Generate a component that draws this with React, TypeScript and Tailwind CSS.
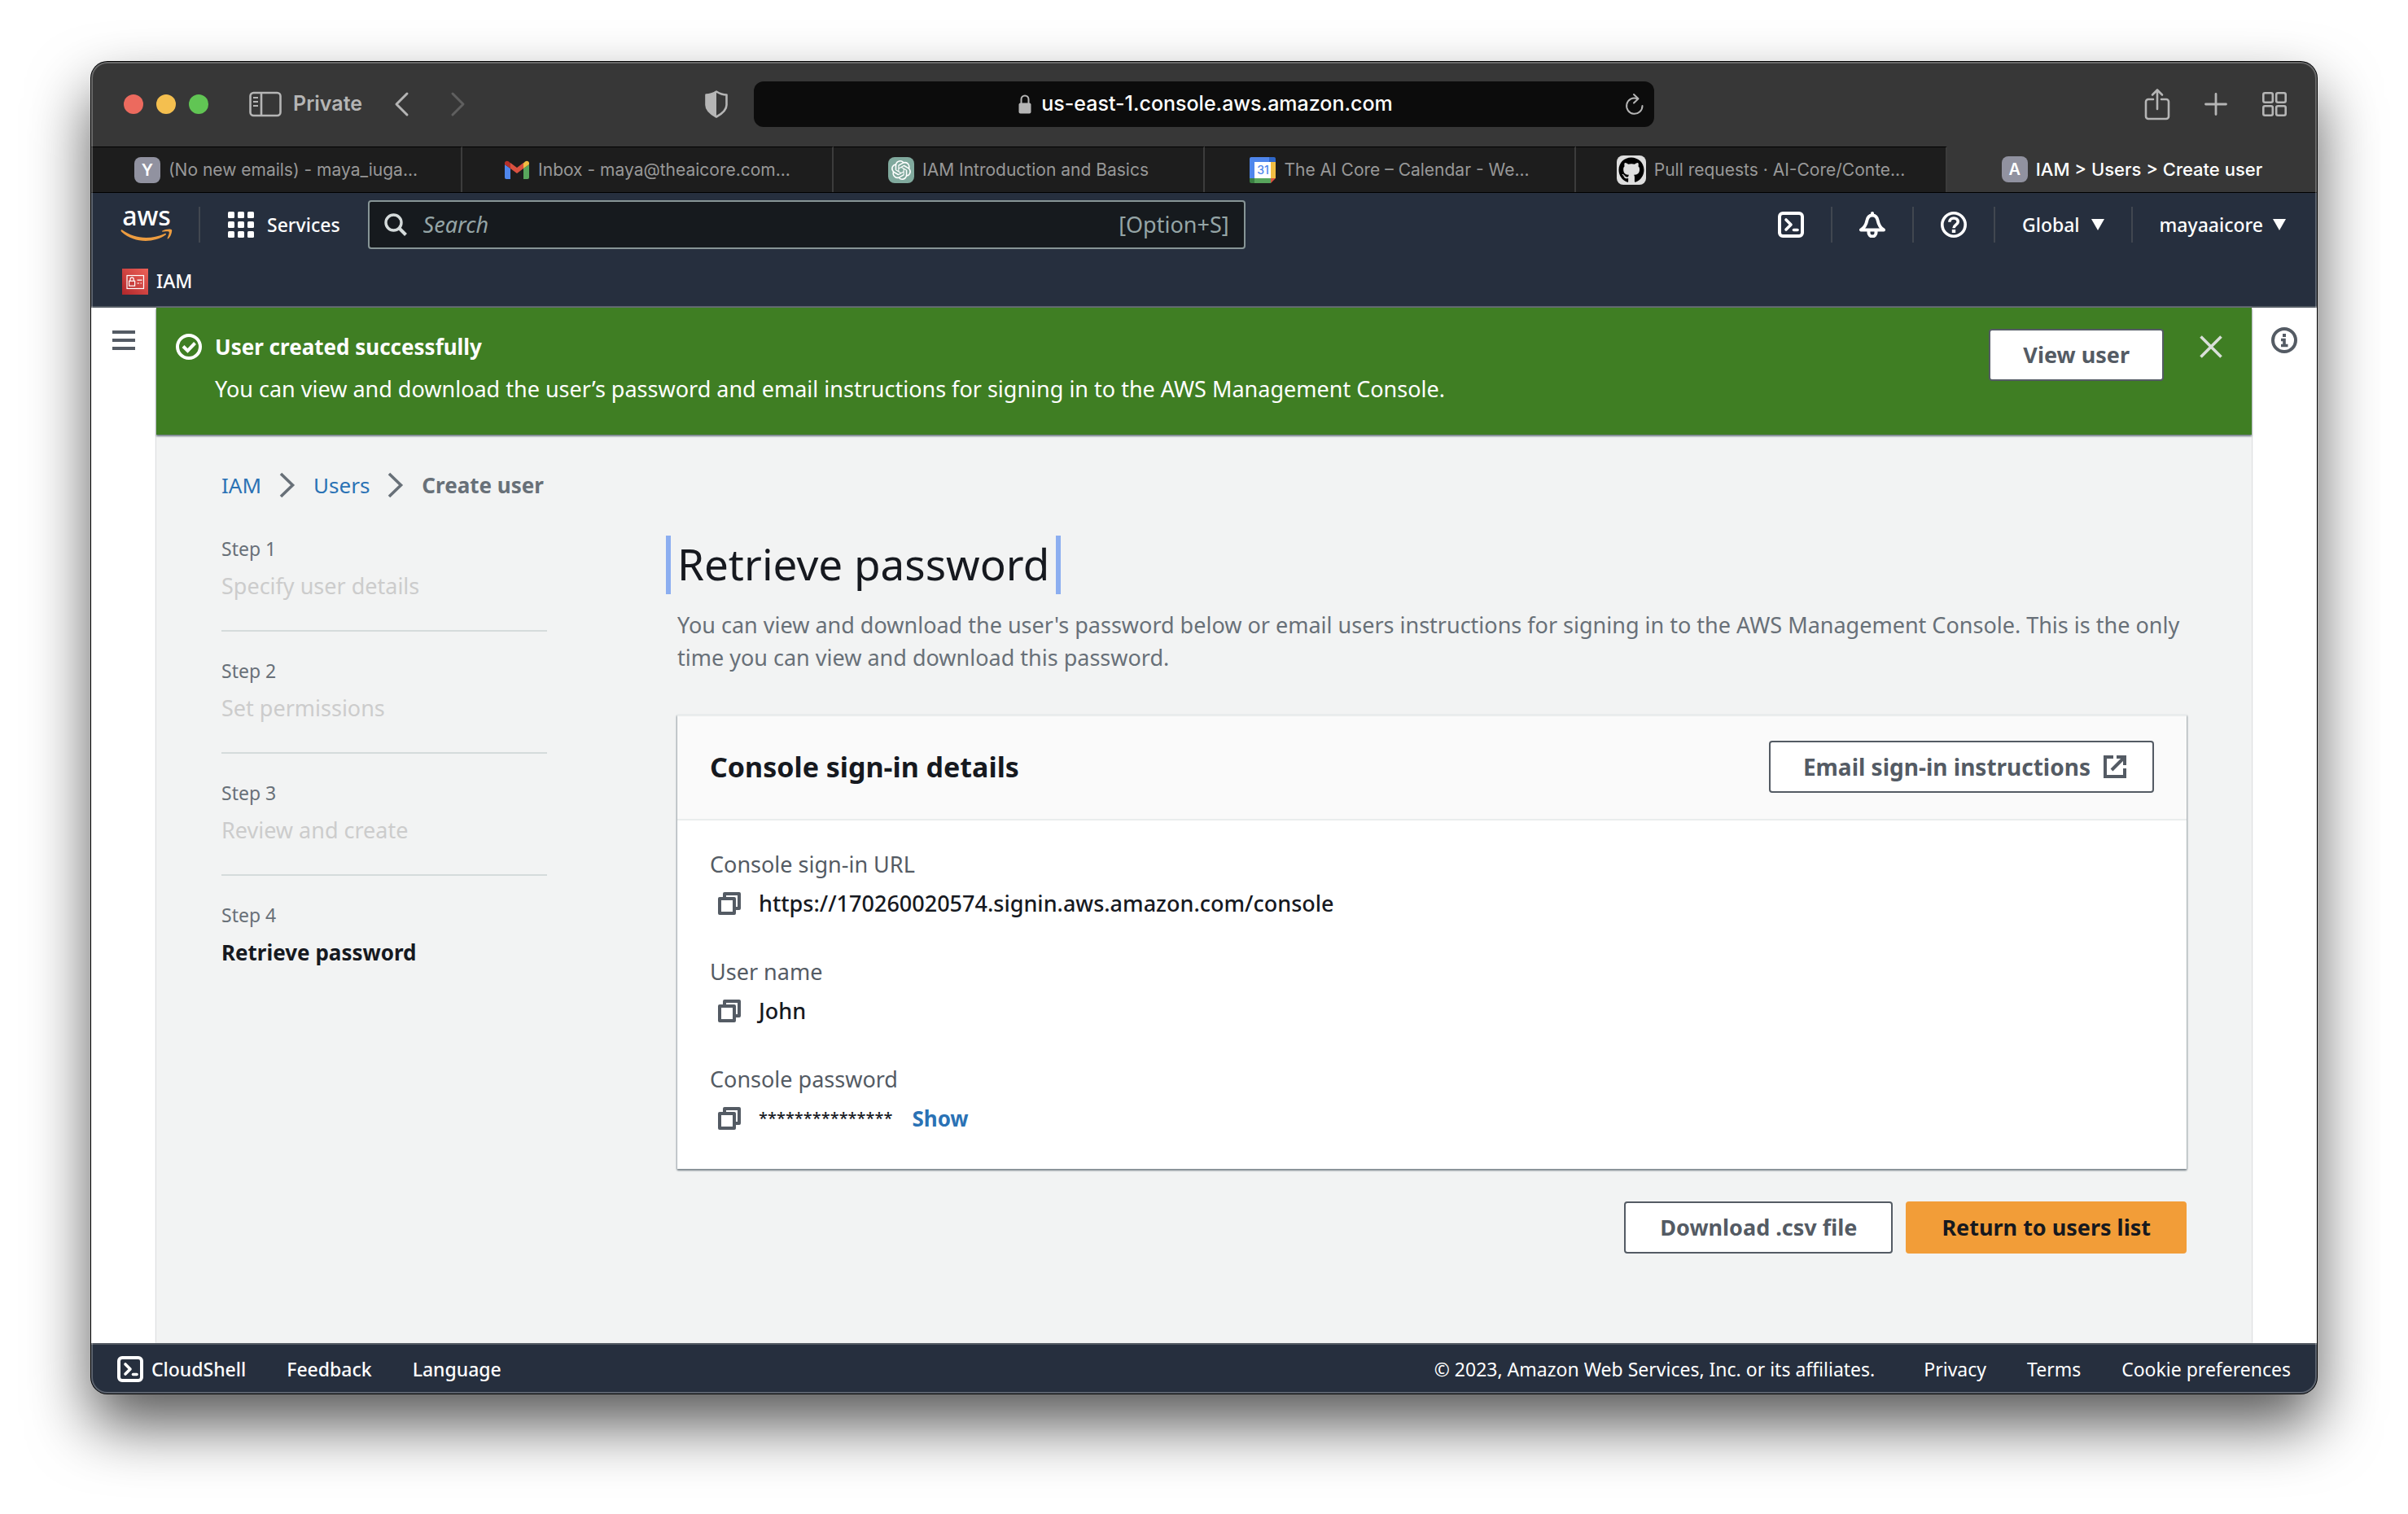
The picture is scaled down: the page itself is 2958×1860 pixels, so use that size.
import type { ReactNode } from 'react';
import { FaGithub } from 'react-icons/fa';
import { SiOpenai } from 'react-icons/si';

/* ---------- Icons ---------- */

const SidebarIcon = () => (
  <svg className="h-8 w-10" viewBox="0 0 40 32" fill="none" stroke="currentColor" strokeWidth="2.6" aria-hidden="true">
    <rect x="1.5" y="2" width="37" height="28" rx="4" />
    <path d="M15 2v28" />
    <path d="M5 8h6M5 13h6M5 18h6" strokeWidth="2" />
  </svg>
);

const ChevronLeftThin = () => (
  <svg className="h-8 w-5" viewBox="0 0 20 32" fill="none" stroke="currentColor" strokeWidth="3" strokeLinecap="round" strokeLinejoin="round" aria-hidden="true">
    <path d="M17 3L4 16l13 13" />
  </svg>
);

const ChevronRightThin = () => (
  <svg className="h-8 w-5" viewBox="0 0 20 32" fill="none" stroke="currentColor" strokeWidth="3" strokeLinecap="round" strokeLinejoin="round" aria-hidden="true">
    <path d="M3 3l13 13L3 29" />
  </svg>
);

const ShieldIcon = () => (
  <svg className="h-9 w-7" viewBox="0 0 28 36" aria-hidden="true">
    <path d="M14 2.500C18 5 22 6.500 26.500 6.500V19c0 7-6 11-12.500 14.500C7.500 30 1.500 26 1.500 19V6.500C6 6.500 10 5 14 2.500z" fill="none" stroke="currentColor" strokeWidth="2.600" strokeLinejoin="round" />
    <path d="M14 2.500V33.500C7.500 30 1.500 26 1.500 19V6.500C6 6.500 10 5 14 2.500z" fill="currentColor" />
  </svg>
);

const LockIcon = () => (
  <svg className="h-6 w-4" viewBox="0 0 16 24" aria-hidden="true">
    <rect x="0.500" y="10.500" width="15" height="13" rx="2" fill="currentColor" />
    <path d="M3.500 11V6a4.500 4.500 0 0 1 9 0v5" fill="none" stroke="currentColor" strokeWidth="2" />
  </svg>
);

const ReloadIcon = () => (
  <svg className="h-7 w-6" viewBox="0 0 24 28" fill="none" stroke="currentColor" strokeWidth="2" strokeLinecap="round" strokeLinejoin="round" aria-hidden="true">
    <path d="M21.500 16A9.700 9.700 0 1 1 15 7" />
    <path d="M11 2l5.500 5.200L11 12.500" />
  </svg>
);

const ShareIcon = () => (
  <svg className="h-10 w-8" viewBox="0 0 32 40" fill="none" stroke="currentColor" strokeWidth="2.600" strokeLinecap="round" strokeLinejoin="round" aria-hidden="true">
    <path d="M11 14H5a3 3 0 0 0-3 3v18a3 3 0 0 0 3 3h22a3 3 0 0 0 3-3V17a3 3 0 0 0-3-3h-6" />
    <path d="M16 26V3M10 8.500L16 2.500l6 6" />
  </svg>
);

const PlusIcon = () => (
  <svg className="h-7 w-7" viewBox="0 0 28 28" fill="none" stroke="currentColor" strokeWidth="2.800" strokeLinecap="round" aria-hidden="true">
    <path d="M14 1.500v25M1.500 14h25" />
  </svg>
);

const TabGridIcon = () => (
  <svg className="h-8 w-8" viewBox="0 0 32 32" fill="none" stroke="currentColor" strokeWidth="2.600" aria-hidden="true">
    <rect x="2.300" y="2.300" width="11.500" height="11.500" rx="2" />
    <rect x="18.200" y="2.300" width="11.500" height="11.500" rx="2" />
    <rect x="2.300" y="18.200" width="11.500" height="11.500" rx="2" />
    <rect x="18.200" y="18.200" width="11.500" height="11.500" rx="2" />
  </svg>
);

const GmailIcon = () => (
  <svg className="h-6 w-8" viewBox="0 0 32 24" aria-hidden="true">
    <path d="M1 4v17a2 2 0 0 0 2 2h5V10L1 5z" fill="#4f86ec" />
    <path d="M31 4v17a2 2 0 0 1-2 2h-5V10l7-5z" fill="#58a55c" />
    <path d="M24 3.500V10l7-5V3.500C31 .8 28 0 26 1.500z" fill="#f1bd42" />
    <path d="M1 3.500V5l7 5V3.500L6 1.500C4 0 1 .8 1 3.500z" fill="#b5302a" />
    <path d="M8 10V3l8 6 8-6v7l-8 6z" fill="#d95140" />
  </svg>
);

const CalendarIcon = () => (
  <span className="relative flex size-8 items-center justify-center">
    <svg className="absolute inset-0 size-8" viewBox="0 0 32 32" aria-hidden="true">
      <path d="M2 0h22v6H6v20H0V2a2 2 0 0 1 2-2z" fill="#4f86ec" />
      <path d="M24 0h6a2 2 0 0 1 2 2v4h-8z" fill="#2f67c8" />
      <path d="M26 6h6v20h-6z" fill="#f1bd42" />
      <path d="M6 26h20v6H6z" fill="#58a55c" />
      <path d="M0 26h6v6H2a2 2 0 0 1-2-2z" fill="#3a7f42" />
      <path d="M26 26h6l-6 6z" fill="#d95140" />
      <path d="M6 6h20v20H6z" fill="#fff" />
    </svg>
    <span className="relative font-['Inter',sans-serif] text-[14px] font-medium leading-none text-[#4f86ec]">31</span>
  </span>
);

const Smile = () => (
  <svg className="h-4 w-16" viewBox="0 0 64 16" aria-hidden="true">
    <path d="M1 1.500C0 2 .5 3 1.500 4 10 11.500 20 15 31 15c8.500 0 18-2.800 24.500-7.500 1.200-.9.200-2.200-1-1.600C47 9.200 39 11 31.500 11 20.500 11 10.500 7.500 2.500 1.800 2 1.300 1.400 1.200 1 1.500z" fill="#ec9c40" />
    <path d="M63 1.200C61.800-.3 54.500.5 51.500 2.600c-.7.500-.5 1.200.3 1.100 2.500-.3 7-.8 7.800.3.8 1-1 5.300-2 7.700-.3.800.3 1.100 1 .5C62.500 9.500 63.700 2.300 63 1.200z" fill="#ec9c40" />
  </svg>
);

const ServicesIcon = () => (
  <svg className="size-8" viewBox="0 0 32 32" fill="currentColor" aria-hidden="true">
    {[0, 12, 24].map((y) => [0, 12, 24].map((x) => <rect key={`${x}-${y}`} x={x} y={y} width="8" height="8" rx="1.500" />))}
  </svg>
);

const SearchIcon = () => (
  <svg className="size-7" viewBox="0 0 28 28" fill="none" stroke="currentColor" strokeWidth="3.400" aria-hidden="true">
    <circle cx="11.500" cy="11.500" r="9.500" />
    <path d="M18 18L26.500 26.500" strokeWidth="4" />
  </svg>
);

const ShellIcon = () => (
  <svg className="size-8" viewBox="0 0 32 32" fill="none" stroke="currentColor" strokeWidth="4" strokeLinecap="round" strokeLinejoin="round" aria-hidden="true">
    <rect x="2" y="2" width="28" height="28" rx="4" />
    <path d="M10 10l6 6-6 6" strokeWidth="3.600" />
    <path d="M19.500 22.500h4.500" strokeWidth="3.600" />
  </svg>
);

const BellIcon = () => (
  <svg className="size-8" viewBox="0 0 32 32" fill="none" stroke="currentColor" strokeWidth="4" strokeLinecap="round" strokeLinejoin="round" aria-hidden="true">
    <path d="M16 2v2" />
    <path d="M16 4.500c-4 0-6 2.500-6.800 7C8.200 17 6.500 19.500 2 22.500h28c-4.500-3-6.200-5.500-7.200-11-.8-4.500-2.800-7-6.800-7z" />
    <path d="M11.500 23.500v2.500a4.500 4.500 0 0 0 9 0v-2.500" />
  </svg>
);

const HelpIcon = () => (
  <svg className="size-8" viewBox="0 0 32 32" fill="none" stroke="currentColor" strokeWidth="3.600" aria-hidden="true">
    <circle cx="16" cy="16" r="14.200" />
    <path d="M10.800 12.800c0-3 2.200-4.800 5.200-4.800s5.200 1.700 5.200 4.500c0 3.600-5.200 3.700-5.200 7.700" strokeWidth="3.600" />
    <path d="M16 22v4" strokeWidth="4.400" />
  </svg>
);

const Caret = () => (
  <svg className="h-3.5 w-4" viewBox="0 0 16 14" fill="currentColor" aria-hidden="true">
    <path d="M0 0h16L8 14z" />
  </svg>
);

const IamIcon = () => (
  <svg className="size-8" viewBox="0 0 32 32" aria-hidden="true">
    <defs>
      <linearGradient id="iam" x1="0" y1="1" x2="1" y2="0">
        <stop offset="0" stopColor="#b0272b" />
        <stop offset="1" stopColor="#ee6158" />
      </linearGradient>
    </defs>
    <rect width="32" height="32" fill="url(#iam)" />
    <g fill="none" stroke="#fff" strokeWidth="1.200">
      <rect x="6" y="8.500" width="20.500" height="16" />
      <rect x="8.600" y="15.200" width="7" height="6" />
      <path d="M10 15v-2a2.100 2.100 0 0 1 4.200 0v2M18.500 14.200h6M18.500 18h2.500M22.500 18h1.500" />
    </g>
  </svg>
);

const MenuIcon = () => (
  <svg className="h-6 w-7" viewBox="0 0 28 24" fill="none" stroke="currentColor" strokeWidth="4" aria-hidden="true">
    <path d="M0 2h28M0 12h28M0 22h28" />
  </svg>
);

const InfoIcon = () => (
  <svg className="size-8" viewBox="0 0 32 32" fill="none" stroke="currentColor" strokeWidth="4" aria-hidden="true">
    <circle cx="16" cy="16" r="14" />
    <path d="M16 8v4" />
    <path d="M12 15.500h4V22M12 22.500h8.500" strokeWidth="3.600" />
  </svg>
);

const CheckIcon = () => (
  <svg className="size-8" viewBox="0 0 32 32" fill="none" stroke="currentColor" strokeWidth="4" aria-hidden="true">
    <circle cx="16" cy="16" r="14" />
    <path d="M9 15.500l5.500 5.500 9-9.500" />
  </svg>
);

const CloseIcon = () => (
  <svg className="size-7" viewBox="0 0 28 28" fill="none" stroke="currentColor" strokeWidth="3.600" aria-hidden="true">
    <path d="M1.500 1.500l25 25M26.500 1.500l-25 25" />
  </svg>
);

const CrumbChevron = () => (
  <svg className="h-8 w-5 text-[#687078]" viewBox="0 0 20 32" fill="none" stroke="currentColor" strokeWidth="3.600" aria-hidden="true">
    <path d="M2 2l14.500 14L2 30" />
  </svg>
);

const CopyIcon = () => (
  <svg className="size-7" viewBox="0 0 28 28" fill="none" stroke="currentColor" strokeWidth="4" strokeLinejoin="round" aria-hidden="true">
    <rect x="2" y="8" width="18" height="18" />
    <path d="M8 7V2h18v18h-5" />
  </svg>
);

const ExternalIcon = () => (
  <svg className="size-7" viewBox="0 0 28 28" fill="none" stroke="currentColor" strokeWidth="4" aria-hidden="true">
    <path d="M12 2H2v24h24V16" />
    <path d="M16 2h10v10M26 2L10 18" />
  </svg>
);

/* ---------- Browser chrome ---------- */

const LetterIcon = ({ letter }: { letter: string }) => (
  <span className="flex size-8 items-center justify-center rounded-lg bg-[#9192a0] text-[20px] font-semibold leading-none text-white">{letter}</span>
);

const tabs: { icon: ReactNode; title: string; active?: boolean }[] = [
  { icon: <LetterIcon letter="Y" />, title: '(No new emails) - maya_iuga...' },
  { icon: <GmailIcon />, title: 'Inbox - maya@theaicore.com...' },
  {
    icon: (
      <span className="flex size-8 items-center justify-center rounded-lg bg-[#80a99d] text-white">
        <SiOpenai className="size-6" />
      </span>
    ),
    title: 'IAM Introduction and Basics',
  },
  { icon: <CalendarIcon />, title: 'The AI Core – Calendar - We...' },
  {
    icon: (
      <span className="flex size-9 items-center justify-center rounded-lg bg-[#dedede] text-black">
        <FaGithub className="size-8" />
      </span>
    ),
    title: 'Pull requests · AI-Core/Conte...',
  },
  { icon: <LetterIcon letter="A" />, title: 'IAM > Users > Create user', active: true },
];

function BrowserBar() {
  return (
    <div className="font-['Inter',sans-serif]">
      <div className="grid h-26 grid-cols-[1fr_1106px_1fr] items-center bg-[#373737] text-[#b5b5b5]">
        <div className="flex items-center pr-8 pl-10">
          <div className="flex gap-4">
            <button aria-label="Close window" className="size-6 rounded-full bg-[#ec6a5e]" />
            <button aria-label="Minimize window" className="size-6 rounded-full bg-[#f4bf4f]" />
            <button aria-label="Zoom window" className="size-6 rounded-full bg-[#61c554]" />
          </div>
          <button className="ml-[50px] flex items-center gap-3.5 text-[25px] font-semibold">
            <SidebarIcon />
            Private
          </button>
          <button aria-label="Back" className="ml-[38px]"><ChevronLeftThin /></button>
          <button aria-label="Forward" className="ml-[50px] text-[#5f5f5f]"><ChevronRightThin /></button>
          <button aria-label="Privacy report" className="ml-auto"><ShieldIcon /></button>
        </div>
        <div className="flex h-14 items-center rounded-xl bg-[#0c0c0c] px-3">
          <div className="flex flex-1 items-center justify-center gap-3 pl-7">
            <LockIcon />
            <input aria-label="Address" readOnly value="us-east-1.console.aws.amazon.com" className="field-sizing-content bg-transparent text-[25px] font-medium text-white outline-none" />
          </div>
          <button aria-label="Reload"><ReloadIcon /></button>
        </div>
        <div className="flex items-center justify-end gap-[42px] pr-9">
          <button aria-label="Share"><ShareIcon /></button>
          <button aria-label="New tab"><PlusIcon /></button>
          <button aria-label="Tab overview"><TabGridIcon /></button>
        </div>
      </div>
      <div role="tablist" className="flex h-[57px] border-b border-black text-[21px]">
        {tabs.map((t) => (
          <button
            key={t.title}
            role="tab"
            aria-selected={!!t.active}
            className={
              t.active
                ? 'flex flex-1 items-center justify-center gap-2.5 bg-[#373737] text-[22px] font-medium text-white'
                : 'flex flex-1 items-center justify-center gap-2.5 border-t border-r-2 border-t-black border-r-[#3c3c3c] bg-[#1d1d1d] text-[#989898]'
            }
          >
            {t.icon}
            <span className="whitespace-nowrap">{t.title}</span>
          </button>
        ))}
      </div>
    </div>
  );
}

/* ---------- AWS console ---------- */

const Divider = () => <span className="h-11 w-0.5 bg-[#414750]" />;

function ConsoleNav() {
  return (
    <header className="border-b-2 border-[#545b64] bg-[#262f3e] text-[23px] font-medium text-white">
      <div className="flex h-[78px] items-center justify-between pr-[38px] pl-9">
        <div className="flex items-center">
          <a href="#home" aria-label="AWS home" className="flex w-16 flex-col items-center gap-1.5">
            <span className="text-[32px] leading-5">aws</span>
            <Smile />
          </a>
          <span className="ml-8 h-11 w-0.5 bg-[#414750]" />
          <button className="ml-[34px] flex items-center gap-4">
            <ServicesIcon />
            Services
          </button>
          <label className="ml-[34px] flex h-[60px] w-[1078px] items-center gap-5 rounded-sm border-2 border-[#879596] bg-[#161a1e] px-[18px] text-[27px] font-normal text-[#95a5a6]">
            <span className="text-[#d5dbdb]"><SearchIcon /></span>
            <input type="search" aria-label="Search" placeholder="Search" className="min-w-0 flex-1 bg-transparent italic outline-none placeholder:text-[#95a5a6]" />
            <span>[Option+S]</span>
          </label>
        </div>
        <div className="flex items-center gap-[33px]">
          <button aria-label="CloudShell"><ShellIcon /></button>
          <Divider />
          <button aria-label="Notifications"><BellIcon /></button>
          <Divider />
          <button aria-label="Help"><HelpIcon /></button>
          <Divider />
          <button aria-haspopup="menu" className="flex items-center gap-3.5">Global <Caret /></button>
          <Divider />
          <button aria-haspopup="menu" className="flex items-center gap-3">mayaaicore <Caret /></button>
        </div>
      </div>
      <nav aria-label="Favorites" className="flex h-[61px] items-center pl-[38px]">
        <a href="#iam" className="flex items-center gap-2.5"><IamIcon />IAM</a>
      </nav>
    </header>
  );
}

function Banner() {
  return (
    <section role="status" className="relative flex gap-4 bg-[#3f7e23] pt-[26px] pr-9 pb-[34px] pl-6 text-white shadow-[0_2px_2px_#6f7a84]">
      <div className="flex h-11 items-center"><CheckIcon /></div>
      <div className="flex-1 space-y-2 leading-11">
        <h2 className="text-[26px] font-bold">User created successfully</h2>
        <p className="text-[27px]">You can view and download the user’s password and email instructions for signing in to the AWS Management Console.</p>
      </div>
      <button className="h-16 rounded-sm border-2 border-[#545b64] bg-white px-10 text-[27px] font-bold text-[#545b64]">View user</button>
      <button aria-label="Dismiss" className="ml-7 flex h-11 items-center text-[#d9dfd9]"><CloseIcon /></button>
    </section>
  );
}

const steps = ['Specify user details', 'Set permissions', 'Review and create', 'Retrieve password'];

function Steps() {
  return (
    <ol className="w-[400px] shrink-0">
      {steps.map((s, i) => (
        <li key={s} className="border-b-2 border-[#d5dbdb] pb-[26px] not-first:pt-[30px] last:border-0">
          <p className="text-[23px] leading-9 text-[#687078]">Step {i + 1}</p>
          {i === steps.length - 1 ? (
            <p aria-current="step" className="text-[26px] font-bold leading-14 text-[#16191f]">{s}</p>
          ) : (
            <p className="text-[27px] leading-14 text-[#cccccc]">{s}</p>
          )}
        </li>
      ))}
    </ol>
  );
}

function Field({ label, children }: { label: string; children: ReactNode }) {
  return (
    <div>
      <dt className="leading-10 text-[#545b64]">{label}</dt>
      <dd className="flex h-14 items-center pl-2.5 font-medium text-[#16191f]">
        <button aria-label={`Copy ${label}`} className="mr-[22px] text-[#545b64]"><CopyIcon /></button>
        {children}
      </dd>
    </div>
  );
}

function Content() {
  return (
    <div className="px-20 pt-10 pb-12">
      <nav aria-label="Breadcrumb" className="flex items-center text-[26px] leading-11">
        <a href="#iam" className="text-[#2a72b5]">IAM</a>
        <span className="mx-[22px]"><CrumbChevron /></span>
        <a href="#users" className="text-[#2a72b5]">Users</a>
        <span className="mx-[22px]"><CrumbChevron /></span>
        <span className="font-bold text-[#687078]">Create user</span>
      </nav>
      <div className="mt-[38px] flex gap-40">
        <Steps />
        <div className="min-w-0 flex-1 pt-0.5">
          <h1 className="-ml-3.5 flex h-18 w-fit items-center border-x-6 border-[#8caef0] px-2 pb-1 text-[53px] leading-none text-[#16191f]">Retrieve password</h1>
          <p className="mt-[18px] text-[27px] leading-10 text-[#687078]">
            You can view and download the user's password below or email users instructions for signing in to the AWS Management Console. This is the only time you can view and download this password.
          </p>
          <section className="mt-[50px] border-t-2 border-[#eaeded] bg-white shadow-[0_2px_2px_#7f8a90,1px_1px_2px_#b5bcbf,-1px_1px_2px_#b5bcbf]">
            <div className="flex items-center justify-between border-b-2 border-[#eaeded] bg-[#fafafa] px-10 pt-[30px] pb-8">
              <h2 className="text-[34px] font-bold leading-11 text-[#16191f]">Console sign-in details</h2>
              <button className="flex h-16 items-center gap-4 rounded-sm border-2 border-[#545b64] bg-white pr-8 pl-10 text-[28px] font-bold text-[#545b64]">
                Email sign-in instructions
                <ExternalIcon />
              </button>
            </div>
            <dl className="space-y-9 px-10 py-[34px] text-[27px]">
              <Field label="Console sign-in URL">https://170260020574.signin.aws.amazon.com/console</Field>
              <Field label="User name">John</Field>
              <Field label="Console password">
                <span className="text-[20px]">***************</span>
                <button className="ml-6 text-[26px] font-bold text-[#2a72b5]">Show</button>
              </Field>
            </dl>
          </section>
          <div className="mt-10 flex justify-end gap-4">
            <button className="h-16 rounded-sm border-2 border-[#545b64] bg-white px-[42px] text-[27px] font-bold text-[#545b64]">Download .csv file</button>
            <button className="h-16 rounded-sm border-2 border-[#f29d38] bg-[#f29d38] px-[42px] text-[27px] font-bold text-[#16191f]">Return to users list</button>
          </div>
        </div>
      </div>
    </div>
  );
}

function Footer() {
  return (
    <footer className="flex h-[62px] items-center border-t-2 border-[#545b64] bg-[#262f3e] px-8 text-[23px] text-white">
      <div className="flex items-center gap-[50px] font-medium">
        <button className="flex items-center gap-2.5"><ShellIcon />CloudShell</button>
        <a href="#feedback">Feedback</a>
        <button>Language</button>
      </div>
      <p className="ml-auto">© 2023, Amazon Web Services, Inc. or its affiliates.</p>
      <nav aria-label="Legal" className="ml-[60px] flex gap-[50px]">
        <a href="#privacy">Privacy</a>
        <a href="#terms">Terms</a>
        <a href="#cookies">Cookie preferences</a>
      </nav>
    </footer>
  );
}

export default function App() {
  return (
    <div className="flex min-h-screen flex-col bg-white px-28 pt-19 pb-37 font-['Noto_Sans',sans-serif]">
      <div className="relative flex flex-1 flex-col overflow-hidden rounded-[20px] bg-[#262f3e] shadow-[0_0_0_1px_#000,0_38px_76px_rgba(0,0,0,0.66)]">
        <BrowserBar />
        <ConsoleNav />
        <div className="flex flex-1 bg-white text-[#545b64]">
          <aside className="flex w-20 flex-col items-start pt-7 pl-[26px]">
            <button aria-label="Open navigation"><MenuIcon /></button>
          </aside>
          <main className="min-w-0 flex-1 bg-[#f2f3f3] shadow-[0_0_2px_#9aa0a3]">
            <Banner />
            <Content />
          </main>
          <aside className="flex w-20 flex-col items-start pt-6 pl-6">
            <button aria-label="Open help panel"><InfoIcon /></button>
          </aside>
        </div>
        <Footer />
        <div className="pointer-events-none absolute inset-0 rounded-[20px] border-2 border-white/25" />
      </div>
    </div>
  );
}
